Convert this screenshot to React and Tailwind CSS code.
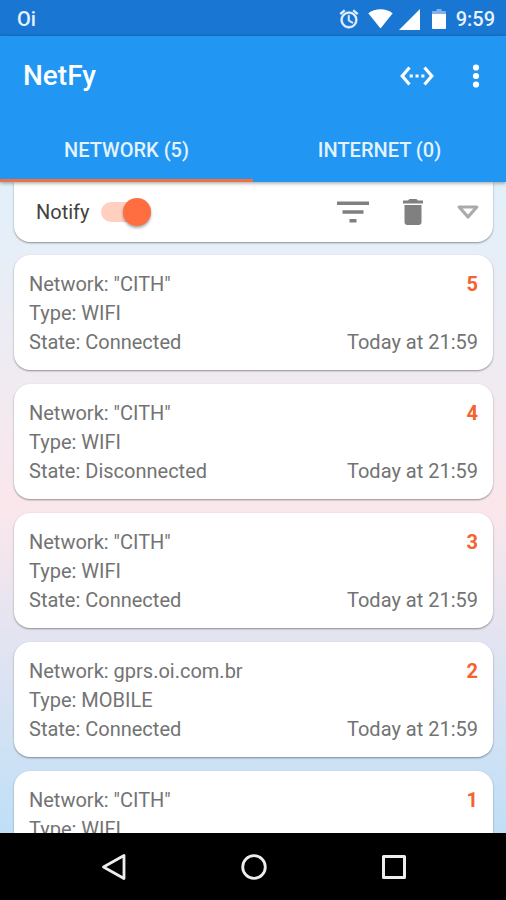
import React, { useState } from "react";

const entries = [
  { id: 5, network: '"CITH"', type: "WIFI", state: "Connected", time: "Today at 21:59" },
  { id: 4, network: '"CITH"', type: "WIFI", state: "Disconnected", time: "Today at 21:59" },
  { id: 3, network: '"CITH"', type: "WIFI", state: "Connected", time: "Today at 21:59" },
  { id: 2, network: "gprs.oi.com.br", type: "MOBILE", state: "Connected", time: "Today at 21:59" },
  { id: 1, network: '"CITH"', type: "WIFI", state: "Connected", time: "Today at 21:59" },
];

function StatusBar() {
  return (
    <div className="flex h-9 shrink-0 items-center justify-between bg-[#1976d2] pt-0.5 pr-[11px] pl-[17px] text-xl font-medium text-[#e8f2fc]">
      <span>Oi</span>
      <div className="flex items-center">
        <svg className="mr-2 size-[22px]" viewBox="0 0 24 24" fill="currentColor" aria-hidden="true">
          <path d="M22 5.72l-4.6-3.86-1.29 1.53 4.6 3.86L22 5.72zM7.88 3.39L6.6 1.86 2 5.71l1.29 1.53 4.59-3.85zM12.5 8H11v6l4.75 2.85.75-1.23-4-2.37V8zM12 4c-4.97 0-9 4.03-9 9s4.02 9 9 9a9 9 0 0 0 0-18zm0 16c-3.87 0-7-3.13-7-7s3.13-7 7-7 7 3.13 7 7-3.13 7-7 7z" stroke="currentColor" strokeWidth="0.6" />
        </svg>
        <svg className="mr-1.5 h-5 w-[25px]" viewBox="0 0 25 20" fill="#fff" aria-hidden="true">
          <path d="M12.500 19.500L.3 4.300C3.700 1.600 8 .2 12.500.2s8.800 1.400 12.200 4.100z" />
        </svg>
        <svg className="mr-3 h-[21px] w-[21px]" viewBox="0 0 21 21" fill="#fff" aria-hidden="true">
          <path d="M21 0v21H0z" />
        </svg>
        <svg className="mr-2.5 h-5 w-3.5" viewBox="0 0 14 20" aria-hidden="true">
          <path d="M4.500 0h5v2H13a1 1 0 0 1 1 1v2H0V3a1 1 0 0 1 1-1h3.500z" fill="#7fb2e8" />
          <path d="M0 5h14v14a1 1 0 0 1-1 1H1a1 1 0 0 1-1-1z" fill="#fff" />
        </svg>
        <span>9:59</span>
      </div>
    </div>
  );
}

function AppBar() {
  return (
    <div className="flex h-20 items-center justify-between pr-[18px] pl-[23px] text-white">
      <h1 className="text-[28px] leading-8 font-medium">NetFy</h1>
      <div className="flex items-center gap-[30px]">
        <button type="button" aria-label="Connections" className="block">
          <svg className="h-5 w-[34px]" viewBox="0 0 34 20" aria-hidden="true">
            <path d="M9.500 1.500L2.200 10l7.300 8.500M24.500 1.500l7.300 8.500-7.300 8.500" fill="none" stroke="currentColor" strokeWidth="3.200" />
            <path d="M9.700 8.400h3.100v3.100H9.700zM15.500 8.400h3.100v3.100h-3.100zM21.300 8.400h3.100v3.100h-3.100z" fill="currentColor" />
          </svg>
        </button>
        <button type="button" aria-label="More options" className="block">
          <svg className="h-6 w-6" viewBox="0 0 24 24" fill="currentColor" aria-hidden="true">
            <circle cx="12" cy="3.500" r="3.100" />
            <circle cx="12" cy="12" r="3.100" />
            <circle cx="12" cy="20.500" r="3.100" />
          </svg>
        </button>
      </div>
    </div>
  );
}

function Tabs({ active, onSelect }) {
  const tabs = ["NETWORK (5)", "INTERNET (0)"];
  return (
    <div role="tablist" className="grid h-[66px] grid-cols-2">
      {tabs.map((label, i) => (
        <button
          key={label}
          type="button"
          role="tab"
          aria-selected={active === i}
          onClick={() => onSelect(i)}
          className={
            "border-b-[3px] pt-1 text-xl font-medium text-[#e3f2fd] " +
            (active === i ? "border-[#f0703f]" : "border-transparent")
          }
        >
          {label}
        </button>
      ))}
    </div>
  );
}

function Toolbar() {
  const [notify, setNotify] = useState(true);
  return (
    <div className="flex h-[60px] items-center justify-between rounded-b-2xl bg-white pr-3.5 pl-[22px] shadow-[0_1px_2px_rgba(0,0,0,0.4)]">
      <label className="flex items-center gap-[11px] text-xl text-[#424242]">
        Notify
        <input
          type="checkbox"
          checked={notify}
          onChange={(e) => setNotify(e.target.checked)}
          className="relative h-5 w-[50px] appearance-none rounded-full bg-[#e0e0e0] before:absolute before:-top-1 before:left-0 before:size-7 before:rounded-full before:bg-white before:shadow-[0_2px_3px_rgba(0,0,0,0.35)] checked:bg-[#ffcfbf] checked:before:right-0 checked:before:left-auto checked:before:bg-[#ff6e40]"
        />
      </label>
      <div className="flex items-center text-[#808080]">
        <button type="button" aria-label="Filter" className="mr-[34px] block">
          <svg className="h-[22px] w-8" viewBox="0 0 32 22" fill="currentColor" aria-hidden="true">
            <path d="M0 .5h32v3.500H0zM5.500 9.300h21v3.500h-21zM12.500 18.100h7v3.500h-7z" />
          </svg>
        </button>
        <button type="button" aria-label="Delete" className="mr-[34px] block">
          <svg className="h-[26px] w-5" viewBox="0 0 20 26" fill="currentColor" aria-hidden="true">
            <path d="M0 1.500h5L6.500 0h7L15 1.500h5v3H0zM1.500 6h17v17a3 3 0 0 1-3 3h-11a3 3 0 0 1-3-3z" />
          </svg>
        </button>
        <button type="button" aria-label="Expand" className="block">
          <svg className="h-3.5 w-[22px]" viewBox="0 0 22 14" fill="none" stroke="#aaaaaa" strokeWidth="3.200" strokeLinejoin="round" aria-hidden="true">
            <path d="M2.200 2h17.600L11 12z" />
          </svg>
        </button>
      </div>
    </div>
  );
}

function EntryCard({ entry }) {
  return (
    <li className="rounded-2xl bg-white pt-[15px] pr-[15px] pb-[13px] pl-[15px] text-xl leading-[29px] text-[#737373] shadow-[0_1px_2px_rgba(0,0,0,0.4)]">
      <div className="flex justify-between">
        <span>Network: {entry.network}</span>
        <span className="font-bold text-[#f4622d]">{entry.id}</span>
      </div>
      <div>Type: {entry.type}</div>
      <div className="flex justify-between">
        <span>State: {entry.state}</span>
        <span>{entry.time}</span>
      </div>
    </li>
  );
}

function NavigationBar() {
  return (
    <nav className="flex h-[67px] shrink-0 items-center justify-center gap-[114px] bg-black pl-0.5 text-[#eeeeee]">
      <button type="button" aria-label="Back" className="block">
        <svg className="h-7 w-[26px]" viewBox="0 0 26 28" fill="none" stroke="currentColor" strokeWidth="2.800" strokeLinejoin="round" aria-hidden="true">
          <path d="M23 2.500v23L2.500 14z" />
        </svg>
      </button>
      <button type="button" aria-label="Home" className="block">
        <svg className="size-[26px]" viewBox="0 0 26 26" fill="none" stroke="currentColor" strokeWidth="2.800" aria-hidden="true">
          <circle cx="13" cy="13" r="11.300" />
        </svg>
      </button>
      <button type="button" aria-label="Recent apps" className="block">
        <svg className="size-[26px]" viewBox="0 0 26 26" fill="none" stroke="currentColor" strokeWidth="3" strokeLinejoin="round" aria-hidden="true">
          <path d="M2.500 2.500h21v21h-21z" />
        </svg>
      </button>
    </nav>
  );
}

export default function App() {
  const [tab, setTab] = useState(0);
  return (
    <div className="flex h-screen flex-col overflow-hidden font-[Roboto,sans-serif]">
      <StatusBar />
      <header className="z-10 shrink-0 bg-[#2196f3] shadow-[0_1px_4px_rgba(0,0,0,0.4)]">
        <AppBar />
        <Tabs active={tab} onSelect={setTab} />
      </header>
      <main className="min-h-0 flex-1 overflow-hidden bg-linear-to-b from-[#e1f0fa] via-[#fae7ec] to-[#bfdff7] pr-[13px] pl-3.5">
        <Toolbar />
        <ul className="mt-[13px] flex flex-col gap-3.5">
          {entries.map((entry) => (
            <EntryCard key={entry.id} entry={entry} />
          ))}
        </ul>
      </main>
      <NavigationBar />
    </div>
  );
}
